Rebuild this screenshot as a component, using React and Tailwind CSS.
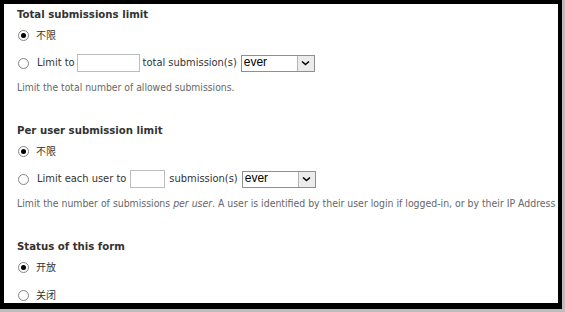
import React from 'react';

function Radio({ checked }) {
    return (
        <span className="w-[11px] h-[11px] rounded-full border border-[#858585] bg-white flex items-center justify-center shrink-0">
            {checked && <span className="w-[5px] h-[5px] rounded-full bg-black" />}
        </span>
    );
}

function Select() {
    return (
        <span className="w-[74px] h-[17px] border border-[#8f8f8f] bg-white flex items-stretch">
            <span className="flex-1 text-[12px] leading-[13px] text-black pl-[2px]" style={{ fontFamily: 'Arial' }}>ever</span>
            <span className="w-[17px] border-l border-[#b5b5b5] bg-[#ececec] flex items-center justify-center">
                <svg width="9" height="6" viewBox="0 0 9 6"><path d="M1 1.5 L4.5 4.5 L8 1.5" fill="none" stroke="#000" strokeWidth="1.6" /></svg>
            </span>
        </span>
    );
}

function Section({ title, children }) {
    return (
        <div className="flex flex-col">
            <div className="text-[11.3px] font-bold text-[#333] leading-[16px]">{title}</div>
            {children}
        </div>
    );
}

export default function App() {
    return (
        <div className="w-[565px] h-[312px] bg-[#bdbdbd] overflow-hidden" style={{ fontFamily: '"DejaVu Sans Condensed", "Noto Sans CJK SC", sans-serif' }}>
            <div className="w-[562px] h-[309px] bg-white border-black border-l-4 border-r-4 border-t-4 border-b-[6px] pl-[13px] pt-[3px] overflow-hidden">
                <Section title="Total submissions limit">
                    <div className="flex items-center gap-[7px] h-[16px] mt-[4px] pl-[1px] text-[10px] text-[#333]">
                        <Radio checked /> <span>不限</span>
                    </div>
                    <div className="flex items-center h-[18px] mt-[11px] pl-[1px] text-[11px] text-[#333]">
                        <Radio />
                        <span className="ml-[8px]">Limit to</span>
                        <span className="ml-[2px] w-[63px] h-[18px] border border-[#bcbcbc] bg-white" />
                        <span className="ml-[3px] mr-[4px]">total submission(s)</span>
                        <Select />
                    </div>
                    <div className="mt-[8px] text-[10.3px] text-[#666] leading-[14px]">Limit the total number of allowed submissions.</div>
                </Section>
                <div className="h-[29px]" />
                <Section title="Per user submission limit">
                    <div className="flex items-center gap-[7px] h-[16px] mt-[4px] pl-[1px] text-[10px] text-[#333]">
                        <Radio checked /> <span>不限</span>
                    </div>
                    <div className="flex items-center h-[18px] mt-[11px] pl-[1px] text-[11px] text-[#333]">
                        <Radio />
                        <span className="ml-[8px]">Limit each user to</span>
                        <span className="ml-[4px] w-[35px] h-[18px] border border-[#bcbcbc] bg-white" />
                        <span className="ml-[4px] mr-[4px]">submission(s)</span>
                        <Select />
                    </div>
                    <div className="mt-[8px] text-[10.4px] text-[#666] leading-[14px] whitespace-nowrap">Limit the number of submissions <em>per user</em>. A user is identified by their user login if logged-in, or by their IP Address</div>
                </Section>
                <div className="h-[29px]" />
                <Section title="Status of this form">
                    <div className="flex items-center gap-[7px] h-[16px] mt-[4px] pl-[1px] text-[10px] text-[#333]">
                        <Radio checked /> <span>开放</span>
                    </div>
                    <div className="flex items-center gap-[7px] h-[16px] mt-[12px] pl-[1px] text-[10px] text-[#333]">
                        <Radio /> <span>关闭</span>
                    </div>
                </Section>
            </div>
        </div>
    );
}
